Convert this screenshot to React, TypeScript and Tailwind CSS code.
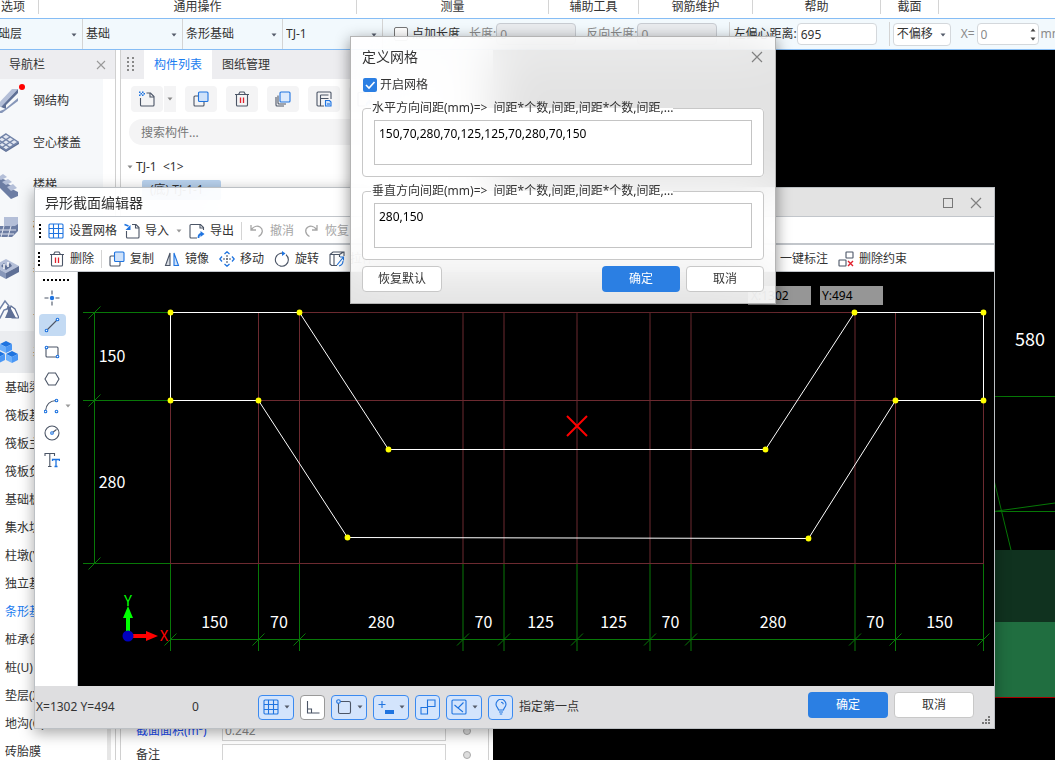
import type { ReactNode } from "react";

const sections = [
  { label: "选项", width: "w-[51px]" },
  { label: "通用操作", width: "w-[318px]" },
  { label: "测量", width: "w-[192px]" },
  { label: "辅助工具", width: "w-[90px]" },
  { label: "钢筋维护", width: "w-[114px]" },
  { label: "帮助", width: "w-[128px]" },
  { label: "截面", width: "w-[58px]" },
];

const filters = [
  { label: "楼层", value: "基础层" },
  { label: "构件大类", value: "基础" },
  { label: "构件类型", value: "条形基础" },
  { label: "构件", value: "TJ-1" },
];

const foundationItems = [
  "基础梁(F)",
  "筏板基础(M)",
  "筏板主筋(R)",
  "筏板负筋(X)",
  "基础板带(W)",
  "集水坑(K)",
  "柱墩(Y)",
  "独立基础(D)",
  "条形基础(T)",
  "桩承台(V)",
  "桩(U)",
  "垫层(X)",
  "地沟(G)",
  "砖胎膜",
];

function Caret({ className = "" }: { className?: string }) {
  return (
    <svg width="6" height="4" viewBox="0 0 6 4" className={`shrink-0 ${className}`}>
      <path d="M0.500 0.500h5L3 3.500z" fill="currentColor" />
    </svg>
  );
}

function CloseIcon() {
  return (
    <svg width="12" height="12" viewBox="0 0 12 12" stroke="#808080" strokeWidth="1.2">
      <path d="M1 1l10 10M11 1L1 11" />
    </svg>
  );
}

function Icon({ children, className = "" }: { children: ReactNode; className?: string }) {
  return (
    <svg
      width="16"
      height="16"
      viewBox="0 0 16 16"
      fill="none"
      stroke="#4b5566"
      strokeWidth="1.1"
      className={`shrink-0 ${className}`}
    >
      {children}
    </svg>
  );
}

const GridIcon = () => (
  <Icon>
    <rect x="1" y="1" width="14" height="14" rx="1" stroke="#1f74e0" />
    <path d="M5.500 1v14M10.500 1v14M1 5.500h14M1 10.500h14" stroke="#1f74e0" />
  </Icon>
);

const ImportIcon = () => (
  <Icon>
    <path d="M8 1.500h4l3 3V14a1 1 0 0 1-1 1H3.500a1 1 0 0 1-1-1V8" />
    <path d="M11.500 1.500v3.500H15" />
    <path d="M0.500 1.500l4 1.500" stroke="#1f74e0" strokeWidth="1.600" />
    <path d="M6.500 2v5h-5z" fill="#1f74e0" stroke="none" />
  </Icon>
);

const ExportIcon = () => (
  <Icon>
    <path d="M14.500 7V4.500l-3-3H2a1 1 0 0 0-1 1V14a1 1 0 0 0 1 1h6" />
    <path d="M11 1.500V5h3.500" />
    <path d="M9.500 15c0-3 1-4 3-4" stroke="#1f74e0" strokeWidth="1.800" />
    <path d="M11.500 8v6l4-3z" fill="#1f74e0" stroke="none" />
  </Icon>
);

const UndoIcon = () => (
  <Icon>
    <path d="M2 2v5h5M2.300 6.700C4.500 3.500 8 2.300 11 4c3.500 2.300 3 7-1.500 9.500" stroke="#a6a6a6" strokeWidth="1.300" />
  </Icon>
);

const RedoIcon = () => (
  <Icon>
    <path d="M13 2v5H8M12.700 6.700C10.500 3.500 7 2.300 4 4c-3.500 2.300-3 7 1.500 9.500" stroke="#a6a6a6" strokeWidth="1.300" />
  </Icon>
);

const TrashIcon = () => (
  <Icon>
    <path d="M1 3.500h14M4.500 3.500L6 1h4l1.500 2.500M2.500 3.500V14a1 1 0 0 0 1 1h9a1 1 0 0 0 1-1V3.500" />
    <path d="M6.500 6.500v5.500M9.500 6.500v5.500" stroke="#e0202c" strokeWidth="1.300" />
  </Icon>
);

const CopyIcon = () => (
  <Icon>
    <path d="M5 5H2a1 1 0 0 0-1 1v8a1 1 0 0 0 1 1h8a1 1 0 0 0 1-1v-3" />
    <rect x="5.500" y="1" width="9.500" height="9.500" rx="1" fill="#cfe2fa" stroke="#1f74e0" />
  </Icon>
);

const MirrorIcon = () => (
  <Icon>
    <path d="M6 2v12.500H1.500z" fill="#d9dde4" />
    <path d="M10 2v12.500h4.500z" fill="#cfe2fa" stroke="#1f74e0" />
  </Icon>
);

const MoveIcon = () => (
  <Icon>
    <path d="M8 4v8M4 8h8" strokeDasharray="2 1" />
    <path
      d="M5.500 3L8 0.800 10.500 3M5.500 13L8 15.200 10.500 13M3 5.500L0.800 8 3 10.500M13 5.500L15.200 8 13 10.500"
      stroke="#1f74e0"
      strokeWidth="1.300"
    />
  </Icon>
);

const RotateIcon = () => (
  <Icon>
    <path d="M6 2.500a6.500 6.500 0 1 0 6 1.200" />
    <path d="M6 2.500c1-.4 2-.4 3-.2" />
    <path d="M8 0v5l3.500-2.500z" fill="#1f74e0" stroke="none" />
  </Icon>
);

const StretchIcon = () => (
  <Icon>
    <path d="M8 14.500H2.500L1 13V3.500L4 1h11v4M1 3.500h9.500M10.500 3.500L14.500 1M5 4v10M10.500 4v2" />
    <path d="M8 14l6.500-8M11 6h3.500v3.500M14 10c0 3-2 4.500-4 5" stroke="#1f74e0" />
  </Icon>
);

const ConstraintIcon = () => (
  <Icon>
    <rect x="8" y="1" width="7" height="6" rx="0.500" />
    <rect x="1" y="9" width="7" height="6" rx="0.500" />
    <path d="M10 10l5 5M15 10l-5 5" stroke="#e0202c" strokeWidth="1.400" />
  </Icon>
);

const NewIcon = () => (
  <Icon>
    <path d="M7.500 2h4L15 5.500V14a1 1 0 0 1-1 1H2.500a1 1 0 0 1-1-1V7" />
    <path d="M11 2v4h4" />
    <path
      d="M0 0.500h1.500v1.500H0zM3 0.500h1.500v1.500H3zM1.500 2H3v1.500H1.500zM4.500 2H6v1.500H4.500zM0 3.500h1.500V5H0zM3 3.500h1.500V5H3z"
      fill="#1f74e0"
      stroke="none"
    />
  </Icon>
);

const LayersIcon = () => (
  <Icon>
    <path d="M1 6v8a1 1 0 0 0 1 1h7M3 4.500V12a1 1 0 0 0 1 1h7" />
    <rect x="5" y="1" width="10" height="10" rx="1" fill="#dceafc" stroke="#1f74e0" />
  </Icon>
);

const SaveIcon = () => (
  <Icon>
    <path d="M8 15H2a1 1 0 0 1-1-1V2a1 1 0 0 1 1-1h12a1 1 0 0 1 1 1v6M4.500 4v11M4.500 4h8M4.500 7.500h8" />
    <path d="M9.500 9.500h4l1.500 1.500v4H9.500z" fill="#cfe2fa" stroke="#1f74e0" />
    <path d="M11 13h3" stroke="#1f74e0" />
  </Icon>
);

function Node({ x, y }: { x: number; y: number }) {
  return <circle cx={x} cy={y} r="1.300" fill="#fff" stroke="#1f74e0" />;
}

const drawTools = [
  {
    name: "点",
    icon: (
      <>
        <path d="M8 0.500v4M8 11.500v4M0.500 8h4M11.500 8h4" />
        <circle cx="8" cy="8" r="2.200" fill="#1f74e0" stroke="none" />
      </>
    ),
  },
  {
    name: "直线",
    icon: (
      <>
        <path d="M3 13L13 3" />
        <Node x={2.5} y={13.5} />
        <Node x={13.5} y={2.5} />
      </>
    ),
  },
  {
    name: "矩形",
    icon: (
      <>
        <rect x="2" y="3" width="12" height="10" rx="1" />
        <Node x={2.5} y={3.5} />
        <Node x={13.5} y={12.5} />
      </>
    ),
  },
  { name: "多边形", icon: <path d="M4.500 2h7L15 8l-3.500 6h-7L1 8z" /> },
  {
    name: "弧线",
    icon: (
      <>
        <path d="M1.500 13C2 7 5 3 12 2.500" />
        <Node x={1.5} y={13.5} />
        <Node x={12.5} y={2.5} />
        <Node x={12.5} y={13.5} />
      </>
    ),
  },
  {
    name: "圆",
    icon: (
      <>
        <circle cx="8" cy="8" r="7" />
        <path d="M8 8l4.500-3.500" />
        <Node x={8} y={8} />
      </>
    ),
  },
  {
    name: "文字",
    icon: (
      <>
        <path d="M1 4V1.500h9.500V4M5.800 1.500v13M4 14.500h3.500" />
        <path d="M8.500 9V7.500h7V9M12 7.500v7M10.500 14.500h3" stroke="#1f74e0" strokeWidth="1.300" />
      </>
    ),
  },
];

const snapTools = [
  {
    name: "网格",
    menu: true,
    icon: (
      <>
        <rect x="1" y="1" width="14" height="14" rx="1" />
        <path d="M5.500 1v14M10.500 1v14M1 5.500h14M1 10.500h14" />
      </>
    ),
  },
  { name: "正交", menu: false, off: true, icon: <path d="M2.500 2v12h12M2.500 10h4v4" stroke="#4b5566" /> },
  {
    name: "对象捕捉",
    menu: true,
    icon: (
      <>
        <rect x="2.500" y="2.500" width="12" height="12" rx="1.500" stroke="#4b5566" />
        <circle cx="2.500" cy="2.500" r="1.800" fill="#d3e4fc" />
      </>
    ),
  },
  {
    name: "动态输入",
    menu: true,
    icon: (
      <>
        <path d="M0.500 5.500h7M4 2v7" />
        <rect x="7" y="11" width="9" height="4" fill="#1f74e0" stroke="none" />
      </>
    ),
  },
  {
    name: "约束",
    menu: false,
    icon: <path d="M7.500 1H15v6.500H7.500zM1 8.500h6.500V15H1zM7.500 7v2" />,
  },
  {
    name: "极轴",
    menu: true,
    icon: (
      <>
        <rect x="1" y="1" width="14" height="14" rx="1" />
        <path d="M12.500 3.500L7 9l5 4M3.500 6L7 9" />
      </>
    ),
  },
  {
    name: "提示",
    menu: false,
    icon: (
      <path d="M5.500 11c0-2-2.500-3-2.500-5.700a5 5 0 0 1 10 0C13 8 10.500 9 10.500 11zM6 13h4M6.800 15h2.400M8 3.200c1.400 0 2.200.9 2.200 2" />
    ),
  },
];

function ToolButton({ icon, label, disabled }: { icon: ReactNode; label: string; disabled?: boolean }) {
  return (
    <button type="button" disabled={disabled} className="flex shrink-0 items-center gap-[5px] disabled:text-[#a6a6a6]">
      {icon}
      {label}
    </button>
  );
}

function Cube({ x, y }: { x: number; y: number }) {
  return (
    <g transform={`translate(${x} ${y})`}>
      <path d="M6 0l6 3-6 3-6-3z" fill="#1f74e0" />
      <path d="M0 3l6 3v6l-6-3z" fill="#6db0fb" />
      <path d="M12 3L6 6v6l6-3z" fill="#4a97f5" />
    </g>
  );
}

const categories = [
  {
    name: "钢结构",
    art: (
      <>
        <path d="M2 20L19 2h6L8 20z" fill="#b4bfd8" />
        <path d="M8 20L25 2v4L13 18v4z" fill="#5f7096" />
        <path d="M2 20h5v4l5-2L25 11v3L9 26H2z" fill="#8797b9" />
      </>
    ),
  },
  {
    name: "空心楼盖",
    art: (
      <>
        <path d="M0 13v2l13 8 13-8v-2l-13 8z" fill="#5f7096" />
        <path d="M13 5l12 8-12 8-12-8z" fill="#e3e8f2" stroke="#7183a8" strokeWidth="1.500" />
        <path d="M9 8l12 8M5 10.500l12 8M17 8L5 16M21 10.500L9 18.500" stroke="#7183a8" strokeWidth="1.500" />
      </>
    ),
  },
  {
    name: "楼梯",
    art: (
      <>
        <path d="M4 8l6-4v4l5 2v3l4 2v3l6 3v4l-7 3L4 14z" fill="#6c7da3" />
        <path d="M4 7l6-4 4 3-6 3zM9 11l6-3 4 3-6 3zM14 16l6-3 4 4-6 3z" fill="#b4bfd8" />
      </>
    ),
  },
  {
    name: "砌体",
    art: (
      <>
        <path d="M11 4h14v13l-14-4z" fill="#b4bfd8" />
        <path d="M2 13h20l3-2v7l-6 6H2z" fill="#6c7da3" />
        <path d="M2 17h21M2 21h19M11 13l-3 11M18 13l-3 11" stroke="#dfe4ef" />
      </>
    ),
  },
  {
    name: "基坑",
    art: (
      <>
        <path d="M13 4l13 7-13 7-13-7z" fill="#b4bfd8" />
        <path d="M0 11l13 7v6L0 17z" fill="#8797b9" />
        <path d="M26 11l-13 7v6l13-7z" fill="#5f7096" />
        <path d="M8 11l3-3 2 3 4-3 2 3-6 4z" fill="#5f7096" />
        <path d="M11 9v5M15 7v5" stroke="#fff" strokeWidth="1.500" />
      </>
    ),
  },
  {
    name: "土方",
    art: (
      <>
        <path d="M18 9l4 3 4 9h-7l-3-6z" fill="#fff" stroke="#5f7096" strokeWidth="1.200" />
        <path d="M1 21L12 4l4 5-2 3-3 1-4 8z" fill="#fff" stroke="#7183a8" strokeWidth="1.500" />
        <path d="M14 9l3 1 6 11h-11l3-7z" fill="#5f7096" />
      </>
    ),
  },
  {
    name: "基础",
    art: (
      <>
        <Cube x={7} y={2} />
        <Cube x={0} y={12} />
        <Cube x={13} y={12} />
      </>
    ),
  },
];

function Ribbon() {
  return (
    <nav className="-ml-3 flex h-[18px] shrink-0 bg-white">
      {sections.map((s) => (
        <div key={s.label} className={`h-[14px] shrink-0 border-r border-[#d4d4d4] text-center leading-[14px] ${s.width}`}>
          {s.label}
        </div>
      ))}
    </nav>
  );
}

function OptionBar() {
  return (
    <div className="shrink-0 overflow-hidden border-y border-[#86bdf5] bg-[#f2f9fd]">
      <div className="-ml-[17px] flex h-[30px] items-center">
        {filters.map((f) => (
          <div key={f.label} className="relative h-full w-[100px] shrink-0 border-r border-[#d4d4d4]">
            <select aria-label={f.label} className="h-full w-full appearance-none bg-transparent px-[3px]">
              <option>{f.value}</option>
            </select>
            <Caret className="absolute top-[14px] right-[5px] text-[#555c6b]" />
          </div>
        ))}
        <label className="ml-[11px] flex shrink-0 items-center gap-1">
          <input type="checkbox" className="size-[14px] appearance-none rounded-xs border border-[#777] bg-white" />
          点加长度
        </label>
        <label className="ml-[9px] flex shrink-0 items-center text-[#8a8a8a]">
          长度:
          <input disabled defaultValue="0" className="h-[22px] w-20 rounded-sm border border-[#c8ccd2] bg-[#e9ebee] px-[3px]" />
        </label>
        <label className="ml-[10px] flex shrink-0 items-center text-[#8a8a8a]">
          反向长度:
          <input disabled defaultValue="0" className="h-[22px] w-20 rounded-sm border border-[#c8ccd2] bg-[#e9ebee] px-[3px]" />
        </label>
        <label className="ml-3 flex h-6 shrink-0 items-center border-l border-[#d4d4d4] pl-[3px]">
          左偏心距离:
          <input defaultValue="695" className="h-[22px] w-20 rounded-sm border border-[#d4d8dc] bg-white px-[3px]" />
        </label>
        <div className="ml-3 flex h-6 shrink-0 items-center border-l border-[#d4d4d4] pl-[3px]">
          <div className="relative">
            <select aria-label="偏移方式" className="h-[23px] w-[58px] appearance-none rounded-sm border border-[#d4d8dc] bg-white px-[3px]">
              <option>不偏移</option>
            </select>
            <Caret className="absolute top-[10px] right-[5px] text-[#555c6b]" />
          </div>
        </div>
        <label className="relative ml-[10px] flex shrink-0 items-center gap-[2px] text-[#8a8a8a]">
          X=
          <input disabled defaultValue="0" className="h-[22px] w-[62px] rounded-sm border border-[#d4d8dc] bg-white px-[3px]" />
          mm
          <Caret className="absolute top-[5px] right-[27px] rotate-180 text-[#444]" />
          <Caret className="absolute top-[14px] right-[27px] text-[#444]" />
        </label>
      </div>
    </div>
  );
}

function NavPanel() {
  return (
    <aside className="flex w-[116px] shrink-0 flex-col border-r border-[#d0d0d0] bg-white">
      <header className="flex h-[29px] shrink-0 items-center justify-between bg-[#ededf0] px-[9px] pt-px">
        导航栏
        <button type="button" aria-label="关闭导航栏">
          <svg width="10" height="10" viewBox="0 0 10 10" stroke="#999" strokeWidth="1.100">
            <path d="M1 1l8 8M9 1L1 9" />
          </svg>
        </button>
      </header>
      <ul className="w-[103px] shrink-0 bg-[#f6f8fa]">
        {categories.map((c, i) => (
          <li key={c.name} className={`relative flex h-[42px] items-center overflow-hidden pt-px ${i === 6 ? "bg-[#ebedf0]" : ""}`}>
            <svg width="26" height="28" viewBox="0 0 26 28" fill="none" className="-ml-[7px] shrink-0">
              {c.art}
            </svg>
            <span className="ml-[14px]">{c.name}</span>
            {i === 0 && <span className="absolute top-[5px] left-[19px] size-[6px] rounded-full bg-[#f00]" />}
          </li>
        ))}
      </ul>
      <div className="flex min-h-0 flex-1">
        <ul className="w-[107px] pt-px">
          {foundationItems.map((item, i) => (
            <li key={item} className={`h-7 pl-[5px] leading-7 whitespace-nowrap ${i === 8 ? "text-[#1a7cf0]" : ""}`}>
              {item}
            </li>
          ))}
        </ul>
        <div className="w-1 bg-[#e6e6e6]" />
      </div>
    </aside>
  );
}

function PanelButton({ label, children }: { label: string; children: ReactNode }) {
  return (
    <button type="button" aria-label={label} className="flex h-[26px] w-8 shrink-0 items-center justify-center rounded-sm bg-[#f4f4f5]">
      {children}
    </button>
  );
}

function ComponentPanel() {
  return (
    <section className="ml-1 flex w-[369px] shrink-0 flex-col overflow-hidden border-x border-[#d0d0d0] bg-white">
      <header className="flex h-[29px] shrink-0 items-center bg-[#ededf0]">
        <svg width="8" height="15" viewBox="0 0 8 15" fill="#888" className="mr-[9px] ml-[6px] shrink-0">
          {[0, 4, 8, 12].map((y) => (
            <path key={y} d={`M0 ${y}h2v2h-2zM5 ${y}h2v2h-2z`} />
          ))}
        </svg>
        <button type="button" className="h-full w-[68px] bg-white pt-px text-[#1a7cf0]">
          构件列表
        </button>
        <button type="button" className="h-full w-[68px] pt-px">
          图纸管理
        </button>
      </header>
      <div className="mt-[7px] ml-[10px] flex gap-[9px]">
        <div className="flex gap-px">
          <PanelButton label="新建">
            <NewIcon />
          </PanelButton>
          <button type="button" aria-label="新建选项" className="flex w-3 items-center justify-center bg-[#f4f4f5] text-[#888]">
            <Caret />
          </button>
        </div>
        <PanelButton label="复制">
          <CopyIcon />
        </PanelButton>
        <PanelButton label="删除">
          <TrashIcon />
        </PanelButton>
        <PanelButton label="层间复制">
          <LayersIcon />
        </PanelButton>
        <PanelButton label="存档">
          <SaveIcon />
        </PanelButton>
        <PanelButton label="提取">
          <ExportIcon />
        </PanelButton>
      </div>
      <input
        aria-label="搜索构件"
        placeholder="搜索构件..."
        className="mx-2 mt-[7px] h-[26px] shrink-0 rounded-full bg-[#f4f4f5] px-3 placeholder:text-[#777]"
      />
      <ul className="mt-3 flex-1">
        <li>
          <div className="flex h-5 items-center gap-[3px] pl-[6px]">
            <Caret className="text-[#888]" />
            TJ-1 &nbsp;&lt;1&gt;
          </div>
          <div className="mt-[3px] ml-[21px] h-5 w-[79px] rounded-xs bg-[#b9d2ee] px-2 leading-5">(底) TJ-1-1</div>
        </li>
      </ul>
      <div className="-mb-[5px] ml-[15px] flex flex-col gap-[3px]">
        <label className="flex items-center text-[#1a4cf0]">
          <span className="w-[86px]">截面面积(m²)</span>
          <input disabled defaultValue="0.242" className="h-[21px] w-[224px] border border-[#d4d4d4] px-[2px] text-[#8a8a8a]" />
          <span className="ml-[17px] size-2 rounded-full border border-[#aaa] bg-[#ddd]" />
        </label>
        <label className="flex items-center">
          <span className="w-[86px]">备注</span>
          <input className="h-[21px] w-[224px] border border-[#d4d4d4]" />
          <span className="ml-[17px] size-2 rounded-full border border-[#aaa] bg-[#ddd]" />
        </label>
      </div>
    </section>
  );
}

function ModelView() {
  return (
    <section className="ml-1 min-w-0 flex-1 bg-black">
      <svg viewBox="493 50 562 710" preserveAspectRatio="xMinYMin slice" className="h-full w-full">
        <path d="M990 396.500h65M990 511.500h65M990 512l65-9M994 480l17 70" stroke="#067806" fill="none" />
        <rect x="700" y="550" width="355" height="72" fill="#10321f" />
        <rect x="700" y="622" width="355" height="75" fill="#206e40" />
        <path d="M700 697.500h355" stroke="#a00" />
        <text x="1015" y="346" fontSize="18" fill="#fff" className="font-['Noto_Sans_CJK_SC',sans-serif]">
          580
        </text>
      </svg>
    </section>
  );
}

const gridX = [170.5, 258.5, 299.5, 463, 504, 577, 650, 691, 855, 895.5, 983.5];
const spans = [150, 70, 280, 70, 125, 125, 70, 280, 70, 150];
const gridY = [312.5, 400.5, 563.5];
const outline = [
  [170.5, 312.5],
  [299.5, 312.5],
  [388.5, 449.5],
  [765.5, 449.5],
  [854.5, 312.5],
  [983.5, 312.5],
  [983.5, 400.5],
  [895.5, 400.5],
  [808.5, 538.5],
  [347.5, 537.5],
  [258.5, 400.5],
  [170.5, 400.5],
];

function SectionCanvas() {
  return (
    <svg viewBox="78 272 916 414" className="min-w-0 flex-1 bg-black font-['Noto_Sans_CJK_SC',sans-serif]">
      <g stroke="#6c2a30">
        {gridX.map((x) => (
          <path key={x} d={`M${x} 312v252`} />
        ))}
        {gridY.map((y) => (
          <path key={y} d={`M170 ${y}h813`} />
        ))}
      </g>
      <g stroke="#087808">
        <path d="M94.500 312v252M170 639.500h813" />
        {gridX.map((x) => (
          <path key={x} d={`M${x} 564v87M${x - 6} 645.500l12-12`} />
        ))}
        {gridY.map((y) => (
          <path key={y} d={`M83 ${y}h87M88.500 ${y + 6}l12-12`} />
        ))}
      </g>
      <polygon points={outline.map((p) => p.join(",")).join(" ")} fill="none" stroke="#fff" />
      {outline.map(([x, y]) => (
        <circle key={`${x}-${y}`} cx={x} cy={y} r="2.900" fill="#ff0" />
      ))}
      <g fill="#fff" fontSize="16" textAnchor="middle">
        {spans.map((s, i) => (
          <text key={gridX[i]} x={(gridX[i] + gridX[i + 1]) / 2} y="628">
            {s}
          </text>
        ))}
        <text x="112" y="362">
          150
        </text>
        <text x="112" y="488">
          280
        </text>
      </g>
      <path d="M567 416l20 20M587 416l-20 20" stroke="#f00" strokeWidth="2" />
      <g>
        <path d="M126 636v-18h-3l5-12 5 12h-3v18z" fill="#0f0" />
        <path d="M128 634h18v-3l12 5-12 5v-3h-18z" fill="#f00" />
        <circle cx="128" cy="636" r="5.500" fill="#0000c0" />
        <text x="128" y="606" fontSize="15" textAnchor="middle" fill="#0f0">
          Y
        </text>
        <text x="164" y="641" fontSize="15" textAnchor="middle" fill="#f00">
          X
        </text>
      </g>
      <g fontSize="12" className="font-['Noto_Sans',sans-serif]">
        <rect x="748" y="286" width="63" height="19" fill="#969696" />
        <rect x="820" y="286" width="63" height="19" fill="#969696" />
        <text x="751" y="300">
          X:1302
        </text>
        <text x="822" y="300">
          Y:494
        </text>
      </g>
    </svg>
  );
}

function Grip() {
  return <div className="h-[15px] w-[2px] shrink-0 bg-[repeating-linear-gradient(#000_0_2px,transparent_2px_4px)]" />;
}

function SectionEditor() {
  return (
    <div
      role="dialog"
      aria-label="异形截面编辑器"
      className="absolute top-[187px] right-[60px] left-[34px] flex flex-col border border-[#bcc0c4] shadow-[0_4px_14px_rgba(0,0,0,0.35)]"
    >
      <header className="flex h-7 items-center bg-white/89 pt-px pr-3 pl-[10px] backdrop-blur-xl">
        <h2 className="flex-1 text-sm">异形截面编辑器</h2>
        <button type="button" aria-label="最大化" className="mr-[17px] size-[10px] border border-[#777]" />
        <button type="button" aria-label="关闭">
          <CloseIcon />
        </button>
      </header>
      <div className="flex h-7 items-center gap-[7px] border-y border-[#c2c6cb] bg-white pt-[2px] pl-1">
        <Grip />
        <ToolButton icon={<GridIcon />} label="设置网格" />
        <ToolButton icon={<ImportIcon />} label="导入" />
        <Caret className="text-[#999]" />
        <ToolButton icon={<ExportIcon />} label="导出" />
        <div className="h-[18px] w-px bg-[#d4d4d4]" />
        <ToolButton icon={<UndoIcon />} label="撤消" disabled />
        <div className="pl-[3px]">
          <ToolButton icon={<RedoIcon />} label="恢复" disabled />
        </div>
      </div>
      <div className="flex h-7 items-center gap-[10px] border-y border-[#c2c6cb] bg-white pt-[2px] pl-[3px]">
        <Grip />
        <div className="-ml-px flex items-center gap-[7px]">
          <ToolButton icon={<TrashIcon />} label="删除" />
          <div className="h-[18px] w-px bg-[#d4d4d4]" />
          <ToolButton icon={<CopyIcon />} label="复制" />
        </div>
        <ToolButton icon={<MirrorIcon />} label="镜像" />
        <ToolButton icon={<MoveIcon />} label="移动" />
        <ToolButton icon={<RotateIcon />} label="旋转" />
        <ToolButton icon={<StretchIcon />} label="拉伸" />
        <button type="button" className="ml-auto">
          一键标注
        </button>
        <div className="mr-[87px]">
          <ToolButton icon={<ConstraintIcon />} label="删除约束" />
        </div>
      </div>
      <div className="flex bg-white">
        <div className="flex w-[43px] shrink-0 flex-col items-start gap-[5px] border-r border-[#c2c6cb] pl-1">
          <div className="mt-[7px] mb-px ml-1 h-[2px] w-[26px] bg-[repeating-linear-gradient(90deg,#000_0_2px,transparent_2px_4px)]" />
          {drawTools.map((t) => (
            <button
              key={t.name}
              type="button"
              aria-label={t.name}
              className={`relative flex h-[22px] w-[27px] items-center justify-center rounded-sm pr-px ${t.name === "直线" ? "bg-[#c3daf3]" : ""}`}
            >
              <Icon>{t.icon}</Icon>
              {t.name === "弧线" && <Caret className="absolute top-[9px] left-[26px] text-[#999]" />}
            </button>
          ))}
        </div>
        <SectionCanvas />
      </div>
      <footer className="relative flex h-[42px] items-center bg-[#dedee0] pr-5 pl-px">
        <span className="w-[156px]">X=1302 Y=494</span>
        <span className="w-[66px]">0</span>
        <div className="flex gap-[6px]">
          {snapTools.map((t) => (
            <button
              key={t.name}
              type="button"
              aria-label={t.name}
              className={`flex h-[25px] items-center justify-center gap-[5px] rounded-sm border text-[#555c6b] ${t.menu ? "w-9" : "w-[25px]"} ${t.off ? "border-[#999] bg-white" : "border-[#3b8af0] bg-[#d3e4fc]"}`}
            >
              <svg width="16" height="16" viewBox="0 0 16 16" fill="none" stroke="#1f74e0" strokeWidth="1.100" className="shrink-0">
                {t.icon}
              </svg>
              {t.menu && <Caret />}
            </button>
          ))}
        </div>
        <span className="ml-[6px] flex-1">指定第一点</span>
        <button type="button" className="mb-1 h-[26px] w-20 rounded-sm bg-[#2b7fe3] text-white">
          确定
        </button>
        <button type="button" className="mb-1 ml-[6px] h-[26px] w-20 rounded-sm border border-[#c8c8c8] bg-white">
          取消
        </button>
        <svg width="8" height="8" viewBox="0 0 8 8" fill="#777" className="absolute right-1 bottom-1">
          <path d="M6 0h2v2h-2zM3 3h2v2h-2zM6 3h2v2h-2zM0 6h2v2h-2zM3 6h2v2h-2zM6 6h2v2h-2z" />
        </svg>
      </footer>
    </div>
  );
}

function SpacingField({ id, legend, value }: { id: string; legend: string; value: string }) {
  return (
    <fieldset className="mt-[5px] min-w-0 rounded-sm border border-[#c8c8c8] bg-white px-[11px] pt-[3px] pb-[11px]">
      <legend id={id} className="-ml-[3px] pl-px leading-[18px]">
        {legend}(mm)=&gt;&nbsp; 间距*个数,间距,间距*个数,间距,...
      </legend>
      <textarea
        aria-labelledby={id}
        defaultValue={value}
        className="block h-[45px] w-full resize-none border border-[#c4c4c4] bg-white px-1 pt-1 leading-[18px] text-black"
      />
    </fieldset>
  );
}

function GridDialog() {
  return (
    <div
      role="dialog"
      aria-label="定义网格"
      className="absolute top-9 left-[350px] w-[426px] border border-[#b4b4b4] bg-white/89 px-[11px] pb-[11px] shadow-[0_4px_14px_rgba(0,0,0,0.45)] backdrop-blur-xl"
    >
      <header className="flex h-[39px] items-center">
        <h2 className="flex-1 text-sm">定义网格</h2>
        <button type="button" aria-label="关闭" className="mr-px">
          <CloseIcon />
        </button>
      </header>
      <label className="flex h-[18px] items-center gap-[3px] pl-px">
        <span className="relative size-[14px]">
          <input type="checkbox" defaultChecked className="block size-[14px] appearance-none rounded-xs bg-[#2b7fe3]" />
          <svg viewBox="0 0 14 14" className="pointer-events-none absolute inset-0" fill="none" stroke="#fff" strokeWidth="1.600">
            <path d="M3 7l3 3 5.500-6" />
          </svg>
        </span>
        开启网格
      </label>
      <SpacingField id="grid-h" legend="水平方向间距" value="150,70,280,70,125,125,70,280,70,150" />
      <SpacingField id="grid-v" legend="垂直方向间距" value="280,150" />
      <footer className="mt-[6px] flex gap-[6px]">
        <button type="button" className="mr-auto h-[26px] w-20 rounded-sm border border-[#c8c8c8] bg-white">
          恢复默认
        </button>
        <button type="button" className="h-[26px] w-[78px] rounded-sm bg-[#2b7fe3] text-white">
          确定
        </button>
        <button type="button" className="h-[26px] w-[78px] rounded-sm border border-[#c8c8c8] bg-white">
          取消
        </button>
      </footer>
    </div>
  );
}

export default function App() {
  return (
    <div className="relative flex h-screen flex-col overflow-hidden bg-white font-['Noto_Sans','Noto_Sans_CJK_SC',sans-serif] text-xs text-[#333]">
      <Ribbon />
      <OptionBar />
      <main className="flex min-h-0 flex-1">
        <NavPanel />
        <ComponentPanel />
        <ModelView />
      </main>
      <SectionEditor />
      <GridDialog />
    </div>
  );
}
